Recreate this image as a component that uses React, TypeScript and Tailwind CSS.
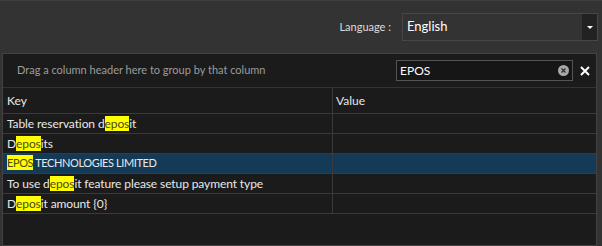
import React from "react";

type Row = { parts: [string, boolean][]; selected?: boolean; caps?: boolean };

const ROWS: Row[] = [
  { parts: [["Table reservation d", false], ["epos", true], ["it", false]] },
  { parts: [["D", false], ["epos", true], ["its", false]] },
  { parts: [["EPOS", true], [" TECHNOLOGIES LIMITED", false]], selected: true, caps: true },
  {
    parts: [
      ["To use d", false],
      ["epos", true],
      ["it feature please setup payment type", false],
    ],
  },
  { parts: [["D", false], ["epos", true], ["it amount {0}", false]] },
];

function KeyText({ parts, caps }: { parts: [string, boolean][]; caps?: boolean }) {
  return (
    <span className={"whitespace-pre " + (caps ? "text-[11px] tracking-[-0.4px]" : "tracking-[-0.1px]")}>
      {parts.map(([t, hl], i) =>
        hl ? (
          <span
            key={i}
            className="inline-block h-[15px] bg-[#ffff00] leading-[15px] text-[#4a4a1a]"
          >
            {t}
          </span>
        ) : (
          <span key={i}>{t}</span>
        )
      )}
    </span>
  );
}

export default function App() {
  return (
    <div
      className="flex h-[246px] w-[602px] flex-col overflow-hidden border-t border-[#3e3e3e] bg-[#333333] text-[12px] text-[#e8e8e8]"
      style={{ fontFamily: "Lato, 'Noto Sans', sans-serif" }}
    >
      {/* language bar */}
      <div className="flex h-[52px] shrink-0 items-center justify-end pr-[4px]">
        <span className="mr-[11px] text-[11px] text-[#dddddd]">Language :</span>
        <div className="flex h-[28px] w-[196px] items-stretch border border-[#474747] bg-[#333333]">
          <span className="flex flex-1 items-center pl-[4px] text-[13px] text-white">English</span>
          <span className="flex w-[15px] items-center justify-center bg-[#222222]">
            <span className="h-0 w-0 border-x-[3px] border-t-[3px] border-x-transparent border-t-white" />
          </span>
        </div>
      </div>

      {/* grid panel */}
      <div className="ml-[2px] mr-[5px] flex flex-1 flex-col border border-[#434343] bg-[#1b1b1b]">
        <div className="flex h-[33px] shrink-0 items-center pl-[14px]">
          <span className="flex-1 text-[11px] text-[#9c9c9c]">
            Drag a column header here to group by that column
          </span>
          <div className="flex h-[21px] w-[177px] items-center border border-[#555555] bg-[#161616] pl-[3px] pr-[3px]">
            <span className="flex-1 text-[12px] text-white">EPOS</span>
            <span className="flex h-[11px] w-[11px] items-center justify-center rounded-full bg-[#a8a8a8]">
              <svg width="7" height="7" viewBox="0 0 7 7">
                <path d="M1.5 1.5L5.5 5.5M5.5 1.5L1.5 5.5" stroke="#333" strokeWidth="1.4" />
              </svg>
            </span>
          </div>
          <span className="flex w-[23px] items-center justify-center">
            <svg width="10" height="10" viewBox="0 0 10 10">
              <path d="M1 1L9 9M9 1L1 9" stroke="#fff" strokeWidth="2" />
            </svg>
          </span>
        </div>

        <div className="grid grid-cols-[330px_1fr] border-t border-[#333333]">
          <div className="flex h-[26px] items-center border-b border-r border-[#3a3a3a] pl-[4px]">Key</div>
          <div className="flex h-[26px] items-center border-b border-[#3a3a3a] pl-[3px]">Value</div>
          {ROWS.map((r, i) => (
            <React.Fragment key={i}>
              <div
                className={
                  "flex h-[20px] items-center border-b border-r border-[#3a3a3a] pl-[4px] " +
                  (r.selected ? "bg-[#133a56]" : "")
                }
              >
                <KeyText parts={r.parts} caps={r.caps} />
              </div>
              <div
                className={
                  "h-[20px] border-b border-[#3a3a3a] " + (r.selected ? "bg-[#133a56]" : "")
                }
              />
            </React.Fragment>
          ))}
        </div>
      </div>
    </div>
  );
}
